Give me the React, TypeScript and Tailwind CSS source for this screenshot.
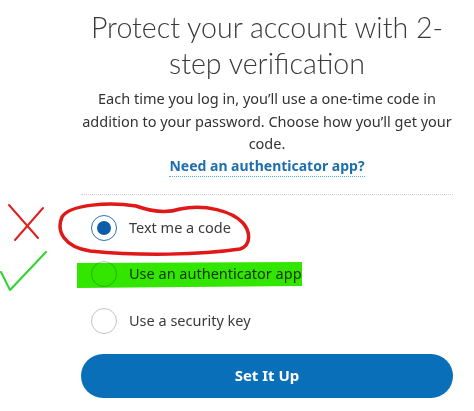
import { useState } from "react";

const options = [
    { id: "sms", label: "Text me a code" },
    { id: "app", label: "Use an authenticator app" },
    { id: "key", label: "Use a security key" },
]

function Radio({ checked }: { checked: boolean }) {
    return (
        <span
            className={
                checked
                    ? "flex h-[26px] w-[26px] shrink-0 items-center justify-center rounded-full border-[1.5px] border-[#2a74b5] bg-white"
                    : "flex h-[26px] w-[26px] shrink-0 items-center justify-center rounded-full border border-[#c4c4c4] bg-white"
            }
        >
            {checked && <span className="h-[14px] w-[14px] rounded-full bg-[#0d5ea6]" />}
        </span>
    )
}

export default function App() {
    const [choice, setChoice] = useState("sms")

    return (
        <div className="relative h-[411px] w-[474px] overflow-hidden bg-white font-['Noto_Sans',sans-serif] text-[#2c2e2f]">
            <div className="ml-[81px] flex w-[372px] flex-col items-center">
                <h1 className="mt-[9px] whitespace-nowrap text-center font-['Lato',sans-serif] text-[28.6px] font-light leading-[36px] text-[#3a3a3a]">
                    Protect your account with 2-
                    <br />
                    step verification
                </h1>
                <p className="mt-[6px] w-[372px] text-center text-[14.5px] leading-[22.5px] text-[#333]">
                    Each time you log in, you’ll use a one-time code in
                    <br />
                    addition to your password. Choose how you’ll get your
                    <br />
                    code.
                </p>
                <a
                    href="#"
                    className="mt-[1px] border-b-[1.5px] border-dotted border-[#5aa7dc] text-[14px] font-bold leading-[20px] text-[#1f6fad]"
                >
                    Need an authenticator app?
                </a>

                <div className="mt-[17px] w-full border-t border-dotted border-[#cfcfcf]" />

                <div className="mt-[20px] flex w-full flex-col gap-[20.5px]">
                    {options.map((o) => (
                        <label
                            key={o.id}
                            className="flex h-[26px] cursor-pointer items-center gap-[12px] pl-[10px]"
                            onClick={() => setChoice(o.id)}
                        >
                            <Radio checked={choice === o.id} />
                            <span className="text-[14.5px] text-[#3b3b3b]">{o.label}</span>
                        </label>
                    ))}
                </div>

                <button className="mt-[20px] h-[44px] w-full rounded-full bg-[#0a6fb9] text-[15px] font-bold text-white">
                    Set It Up
                </button>
            </div>

            {/* hand drawn annotations */}
            <svg
                className="pointer-events-none absolute left-0 top-0 mix-blend-multiply"
                width="474"
                height="411"
                viewBox="0 0 474 411"
            >
                <path d="M9 205 L38 238" stroke="#e02020" strokeWidth="2" fill="none" strokeLinecap="round" />
                <path d="M43 208 L15 240" stroke="#e02020" strokeWidth="2" fill="none" strokeLinecap="round" />
                <path
                    d="M136 206 C110 202 70 204 62 217 C56 231 64 247 90 251 C140 256 200 255 240 249 C252 245 250 231 243 223 C232 211 205 204 180 209 C165 214 150 211 136 206 Z"
                    stroke="#e01818"
                    strokeWidth="3.5"
                    fill="none"
                    strokeLinejoin="round"
                />
                <path d="M1 272 L10 290 L46 252" stroke="#2fd32f" strokeWidth="2" fill="none" strokeLinecap="round" strokeLinejoin="round" />
                <path d="M77 263 L302 262 L302 286 L77 288 Z" fill="#33e600" />
            </svg>
        </div>
    )
}
